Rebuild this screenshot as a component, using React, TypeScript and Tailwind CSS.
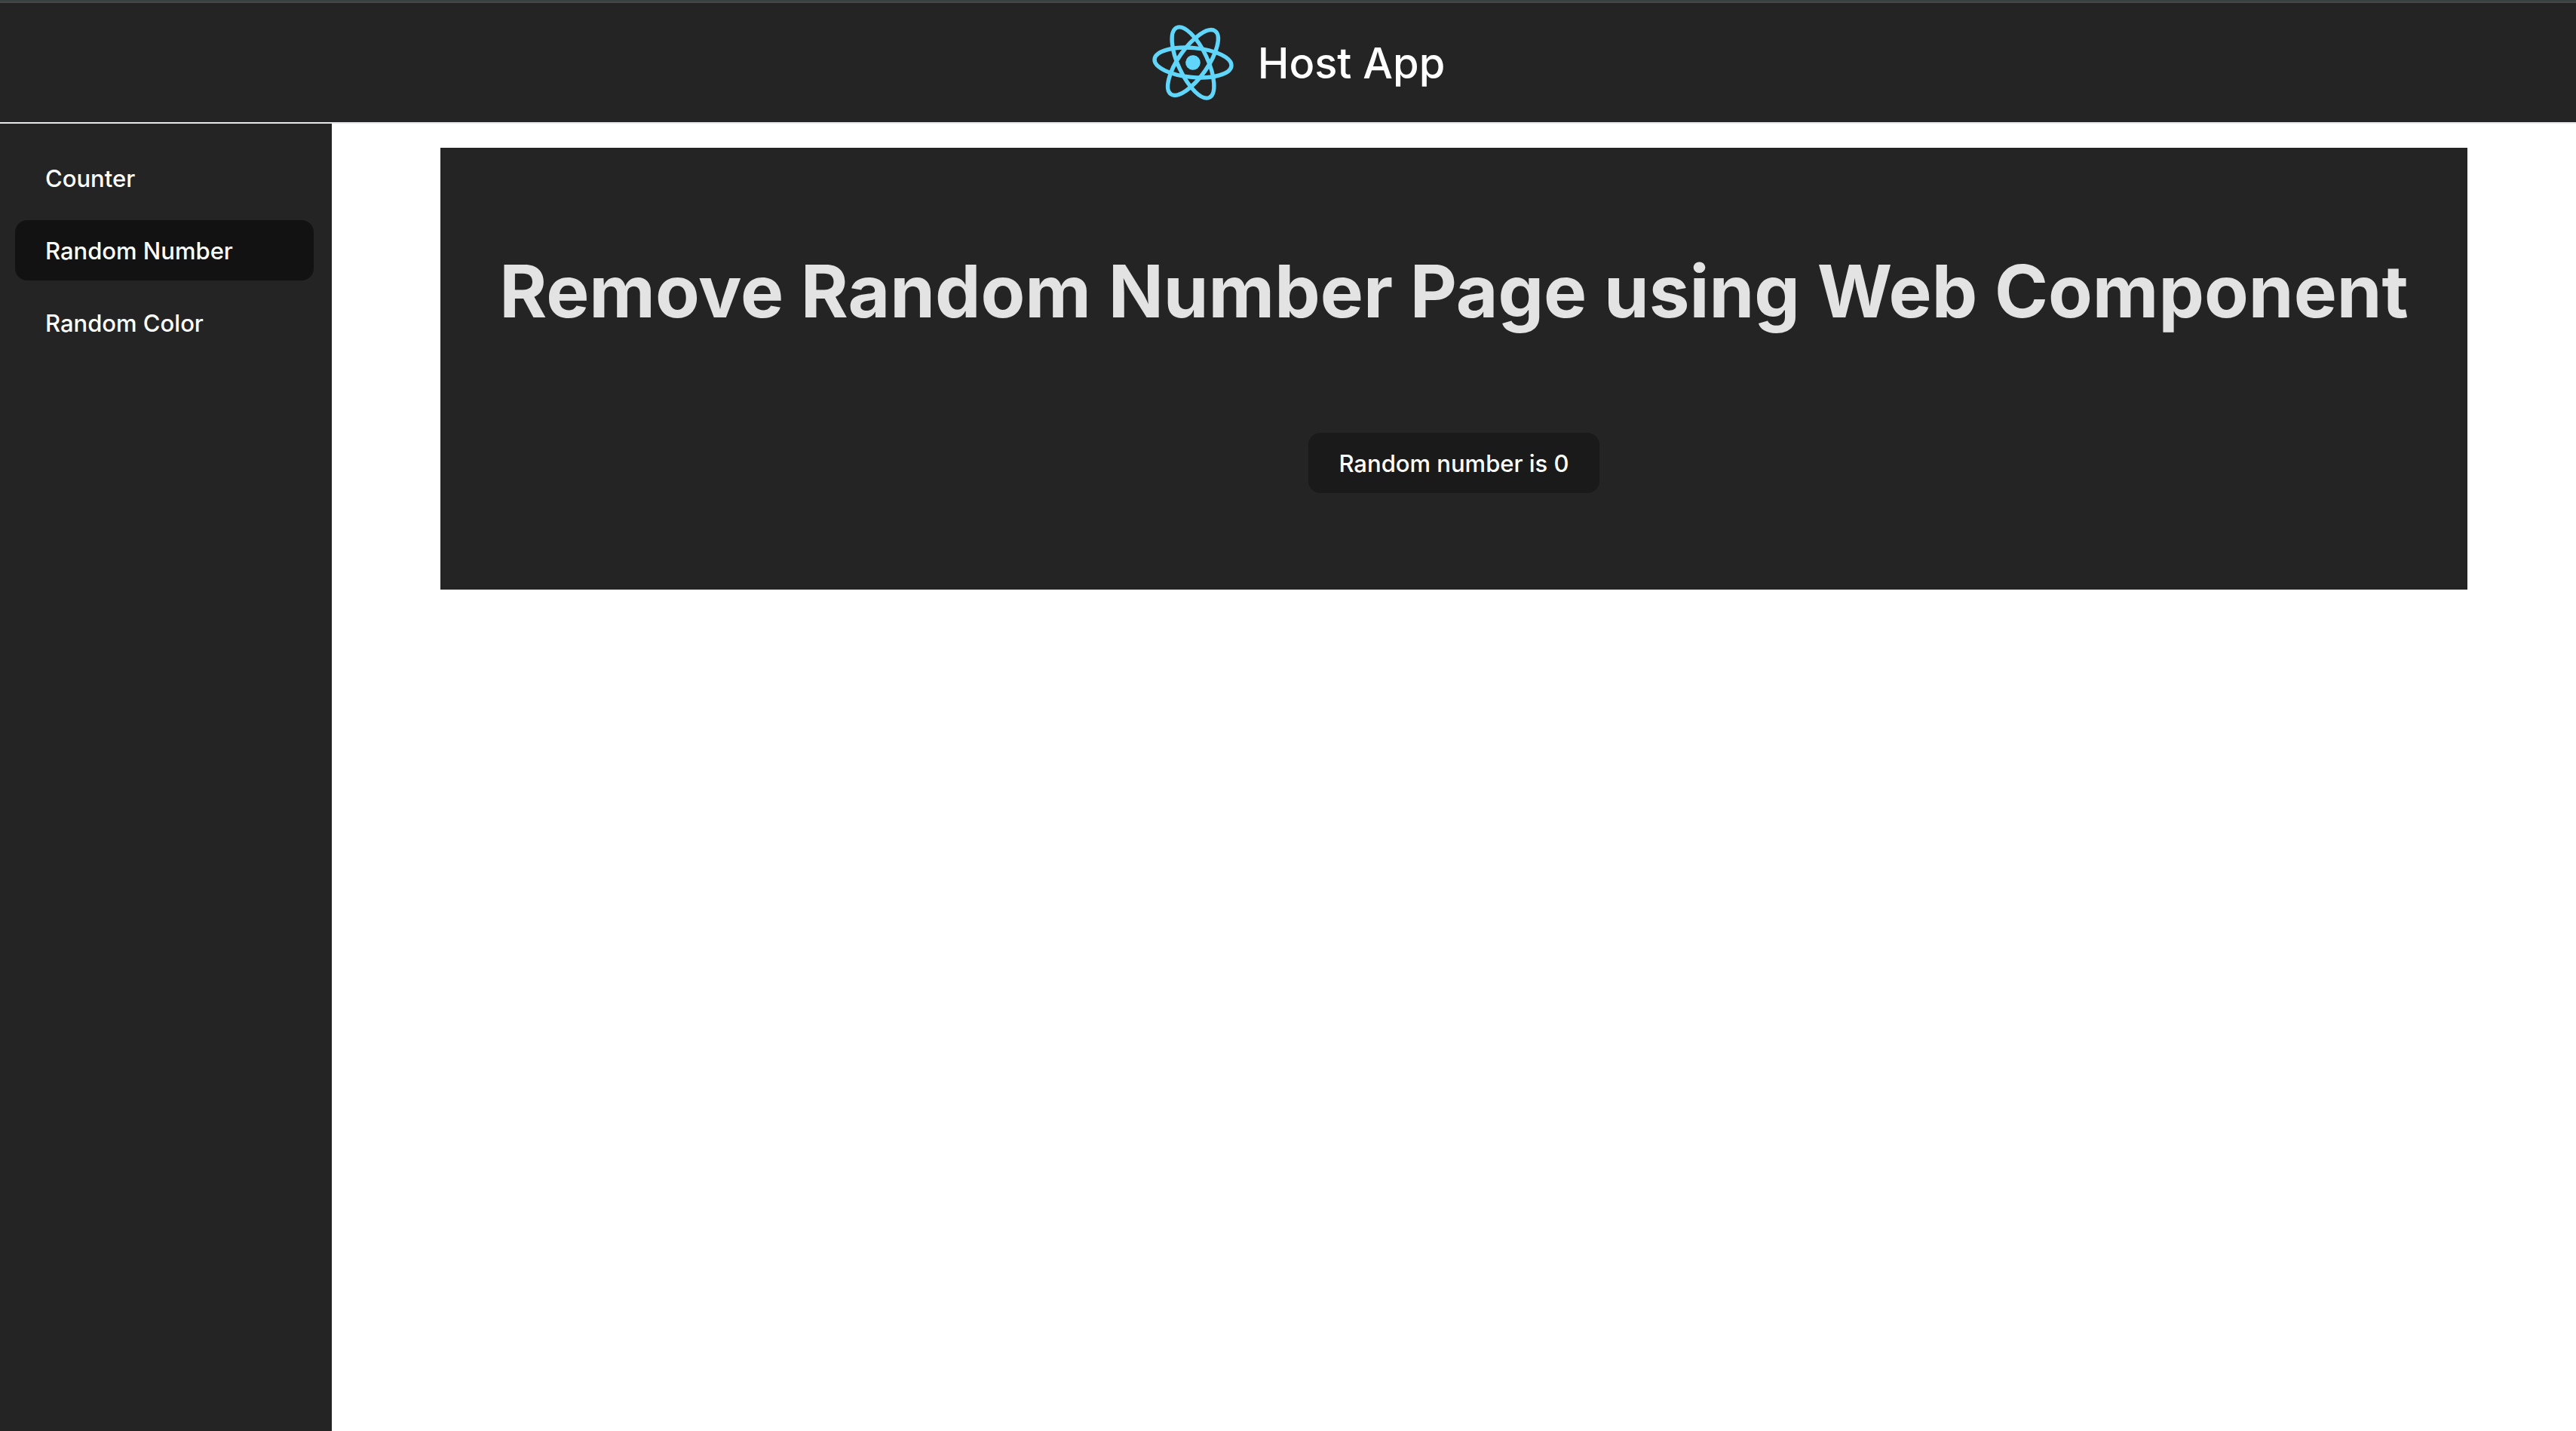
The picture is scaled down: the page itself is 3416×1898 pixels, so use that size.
import { useState } from 'react';

const pages = ['Counter', 'Random Number', 'Random Color'];

function ReactLogo() {
  return (
    <svg
      viewBox="-11.5 -10.23 23 20.46"
      className="h-24 w-[108px] overflow-visible"
      role="img"
      aria-label="React logo"
    >
      <g transform="rotate(5)">
        <circle r="2.1" fill="#61d6fb" />
        <g fill="none" stroke="#61d6fb" strokeWidth="1.15">
          <ellipse rx="10.9" ry="4.15" />
          <ellipse rx="10.9" ry="4.15" transform="rotate(60)" />
          <ellipse rx="10.9" ry="4.15" transform="rotate(120)" />
        </g>
      </g>
    </svg>
  );
}

function Header() {
  return (
    <header className="border-t-2 border-b-2 border-t-[#374142] border-b-gray-200">
      <div className="flex h-40 items-center justify-center gap-8 border-t-2 border-[#444746] bg-[#242424] pl-7">
        <ReactLogo />
        <span className="pt-0.5 text-[56px] leading-[64px] font-medium text-white">Host App</span>
      </div>
    </header>
  );
}

function Sidebar({ current, onSelect }: { current: string; onSelect: (page: string) => void }) {
  return (
    <nav className="flex w-[440px] shrink-0 flex-col gap-4 bg-[#242424] py-8 pr-6 pl-5">
      {pages.map((page) => (
        <a
          key={page}
          href="#"
          aria-current={page === current ? 'page' : undefined}
          onClick={(event) => {
            event.preventDefault();
            onSelect(page);
          }}
          className={
            page === current
              ? 'flex h-20 items-center rounded-2xl bg-[#121212] px-10 pt-0.5 text-[31px] font-medium text-white'
              : 'flex h-20 items-center rounded-2xl px-10 pt-0.5 text-[31px] font-medium text-white'
          }
        >
          {page}
        </a>
      ))}
    </nav>
  );
}

function RandomNumberCard() {
  const [value, setValue] = useState(0);
  return (
    <section className="w-full max-w-[2688px] bg-[#242424] p-16 text-center">
      <h1 className="mt-[70px] text-8xl leading-[112px] font-bold text-[#e3e3e3]">
        Remove Random Number Page using Web Component
      </h1>
      <div className="mt-[132px] mb-16 flex justify-center">
        <button
          type="button"
          onClick={() => setValue(Math.floor(Math.random() * 100))}
          className="h-20 cursor-pointer rounded-2xl bg-[#1a1a1a] px-10 pt-0.5 text-[31px] font-medium text-white"
        >
          Random number is {value}
        </button>
      </div>
    </section>
  );
}

export default function App() {
  const [current, setCurrent] = useState('Random Number');
  return (
    <div className="flex min-h-screen flex-col bg-white font-[Inter,sans-serif]">
      <Header />
      <div className="flex flex-1">
        <Sidebar current={current} onSelect={setCurrent} />
        <main className="flex flex-1 items-start justify-center p-8">
          <RandomNumberCard />
        </main>
      </div>
    </div>
  );
}
